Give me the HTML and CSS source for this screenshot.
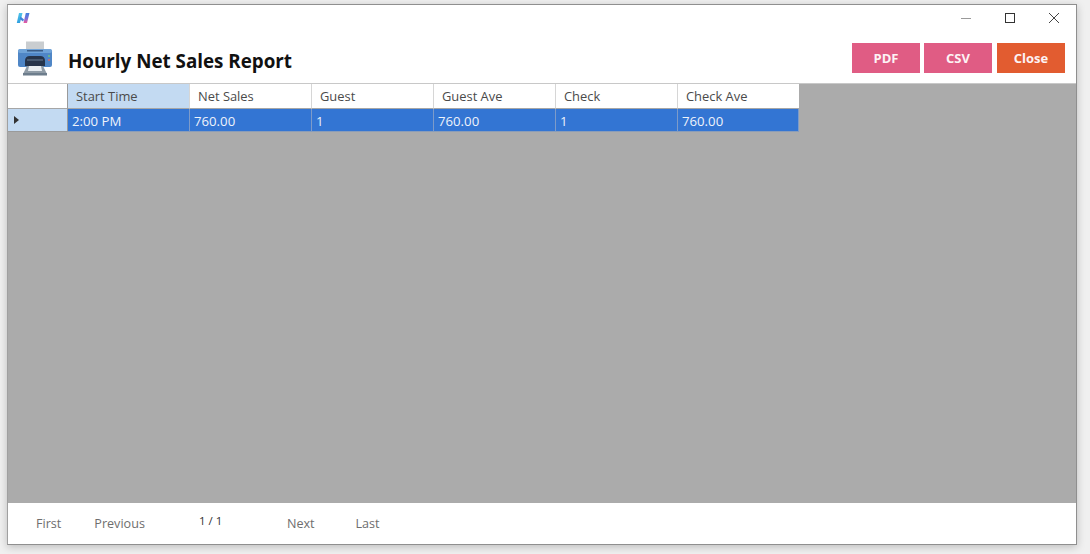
FILE: index.html
```html
<!DOCTYPE html>
<html lang="en">
<head>
<meta charset="utf-8">
<title>Hourly Net Sales Report</title>
<link rel="stylesheet" href="styles.css">
</head>
<body>
<div class="window">
  <div class="titlebar">
    <svg class="app-icon" viewBox="0 0 14 12" width="14" height="12" aria-hidden="true">
      <defs>
        <linearGradient id="appLeft" x1="0" y1="0" x2="0" y2="1"><stop offset="0" stop-color="#4fc3e8"/><stop offset="1" stop-color="#2f9fe0"/></linearGradient>
        <linearGradient id="appRight" x1="0" y1="0" x2="0" y2="1"><stop offset="0" stop-color="#3f7fe0"/><stop offset=".55" stop-color="#7a6fd8"/><stop offset="1" stop-color="#f0589c"/></linearGradient>
      </defs>
      <path d="M3 1H6.500L4 11H0.800Z" fill="url(#appLeft)"/>
      <path d="M4.500 4.500L8 7.500L7 9.500L3.800 7Z" fill="#3f83dc"/>
      <path d="M9.800 1H13.500L11 11H7.500Z" fill="url(#appRight)"/>
    </svg>
    <div class="controls">
      <svg width="12" height="12" viewBox="0 0 12 12" aria-hidden="true"><path d="M1 6.500H11" stroke="#9a9a9a" stroke-width="1"/></svg>
      <svg width="12" height="12" viewBox="0 0 12 12" aria-hidden="true"><rect x="1.500" y="1.500" width="9" height="9" fill="none" stroke="#333" stroke-width="1"/></svg>
      <svg width="12" height="12" viewBox="0 0 12 12" aria-hidden="true"><path d="M1 1L11 11M11 1L1 11" stroke="#444" stroke-width="1"/></svg>
    </div>
  </div>
  <header class="header">
    <svg class="printer" viewBox="0 0 38 36" width="38" height="36" aria-hidden="true">
      <rect x="10" y="0.500" width="18" height="11" fill="#c9cdd0"/>
      <path d="M2 10.500Q2 8 5 8H33Q36 8 36 10.500V24Q36 26 34 26H4Q2 26 2 24Z" fill="#4f86c6"/>
      <rect x="2" y="8" width="34" height="4" rx="2" fill="#6fa3d8"/>
      <rect x="11" y="9" width="16" height="1.500" fill="#3a5c86"/>
      <path d="M9 25V20Q9 15 14 15H24Q29 15 29 20V25Z" fill="#26344a"/>
      <rect x="11" y="18" width="16" height="2" fill="#46586f"/>
      <path d="M11 25H27L31 33H7Z" fill="#8f9ba6"/>
      <path d="M13 25H25L26 30H12Z" fill="#e8edf1"/>
      <rect x="7" y="32" width="24" height="2.500" fill="#6d7d8c"/>
      <circle cx="33" cy="15" r="1" fill="#6fc37a"/>
      <circle cx="33" cy="19" r="1" fill="#d96a6a"/>
    </svg>
    <h1 class="title">Hourly Net Sales Report</h1>
    <div class="actions">
      <button class="btn btn-pink">PDF</button>
      <button class="btn btn-pink">CSV</button>
      <button class="btn btn-orange">Close</button>
    </div>
  </header>
  <main class="grid-area">
    <div class="grid">
      <div class="corner"></div>
      <div class="head head-active">Start Time</div>
      <div class="head">Net Sales</div>
      <div class="head">Guest</div>
      <div class="head">Guest Ave</div>
      <div class="head">Check</div>
      <div class="head">Check Ave</div>
      <div class="row-head"><span class="arrow"></span></div>
      <div class="cell">2:00 PM</div>
      <div class="cell">760.00</div>
      <div class="cell">1</div>
      <div class="cell">760.00</div>
      <div class="cell">1</div>
      <div class="cell">760.00</div>
    </div>
  </main>
  <footer class="pager">
    <span class="page-link first">First</span>
    <span class="page-link prev">Previous</span>
    <span class="page-count">1 / 1</span>
    <span class="page-link next">Next</span>
    <span class="page-link last">Last</span>
  </footer>
</div>
</body>
</html>
```

FILE: styles.css
```css
* { box-sizing: border-box; }
html, body { margin: 0; height: 100%; }
body {
  width: 1090px;
  height: 554px;
  overflow: hidden;
  background: #f0f0f0;
  padding: 4px 13px 9px 7px;
  font-family: "Open Sans", "Noto Sans", sans-serif;
}
.window {
  height: 541px;
  display: flex;
  flex-direction: column;
  background: #fff;
  border: 1px solid #8f8f8f;
  border-left-color: #a0a0a0;
  box-shadow: 0 2px 8px rgba(0, 0, 0, .22);
}
.titlebar {
  height: 26px;
  flex: none;
  display: flex;
  align-items: center;
  justify-content: space-between;
  padding: 0 16px 0 8px;
}
.app-icon { display: block; }
.controls { display: flex; gap: 32px; }
.controls svg { display: block; }
.header {
  height: 53px;
  flex: none;
  display: flex;
  align-items: flex-start;
  padding: 10px 11px 0 8px;
  border-bottom: 1px solid #c8c8c8;
}
.printer { flex: none; }
.title {
  margin: 6px 0 0 14px;
  font-size: 18.800px;
  line-height: 28px;
  font-weight: 700;
  color: #111;
  white-space: nowrap;
}
.actions { margin-left: auto; display: flex; gap: 4px; margin-top: 2px; }
.btn {
  width: 68px;
  height: 30px;
  padding: 0;
  border: 0;
  color: #fdf3f5;
  font: 700 13px/30px "Open Sans", "Noto Sans", sans-serif;
}
.btn-pink { background: #e05c84; }
.btn-orange { background: #e25c30; margin-left: 1px; }
.grid-area { flex: 1; min-height: 0; background: #ababab; }
.grid {
  display: grid;
  grid-template-columns: 60px repeat(5, 122px) 121px;
  grid-template-rows: 25px 23px;
  width: 791px;
  font-size: 12.900px;
  color: #4a4a4a;
}
.corner, .head {
  background: #fff;
  border-right: 1px solid #d6d6d6;
  border-bottom: 1px solid #a6a6a6;
  line-height: 25px;
  padding-left: 8px;
  white-space: nowrap;
}
.corner { border-right-color: #9a9a9a; }
.head:nth-child(7) { border-right: 0; }
.head-active { background: #c3daf2; }
.row-head {
  background: #c3daf2;
  border-right: 1px solid #9a9a9a;
  border-bottom: 1px solid #9a9a9a;
  display: flex;
  align-items: center;
  padding-left: 6px;
}
.arrow {
  width: 0;
  height: 0;
  border-left: 5px solid #333;
  border-top: 4px solid transparent;
  border-bottom: 4px solid transparent;
}
.cell {
  background: #3375d3;
  color: #eef3fb;
  font-size: 13.200px;
  border-right: 1px solid #7d9bc9;
  border-bottom: 1px solid #8b9db8;
  line-height: 24px;
  padding-left: 4px;
  white-space: nowrap;
}
.pager {
  height: 41px;
  flex: none;
  display: flex;
  align-items: center;
  font-size: 12.600px;
  color: #6e6e6e;
  padding-left: 28px;
}
.page-link { white-space: nowrap; }
.prev { margin-left: 33px; }
.page-count { margin-left: 54px; margin-top: -6px; color: #333; font-size: 11.500px; width: 67px; white-space: nowrap; }
.next { margin-left: 21px; }
.last { margin-left: 41px; }
```
